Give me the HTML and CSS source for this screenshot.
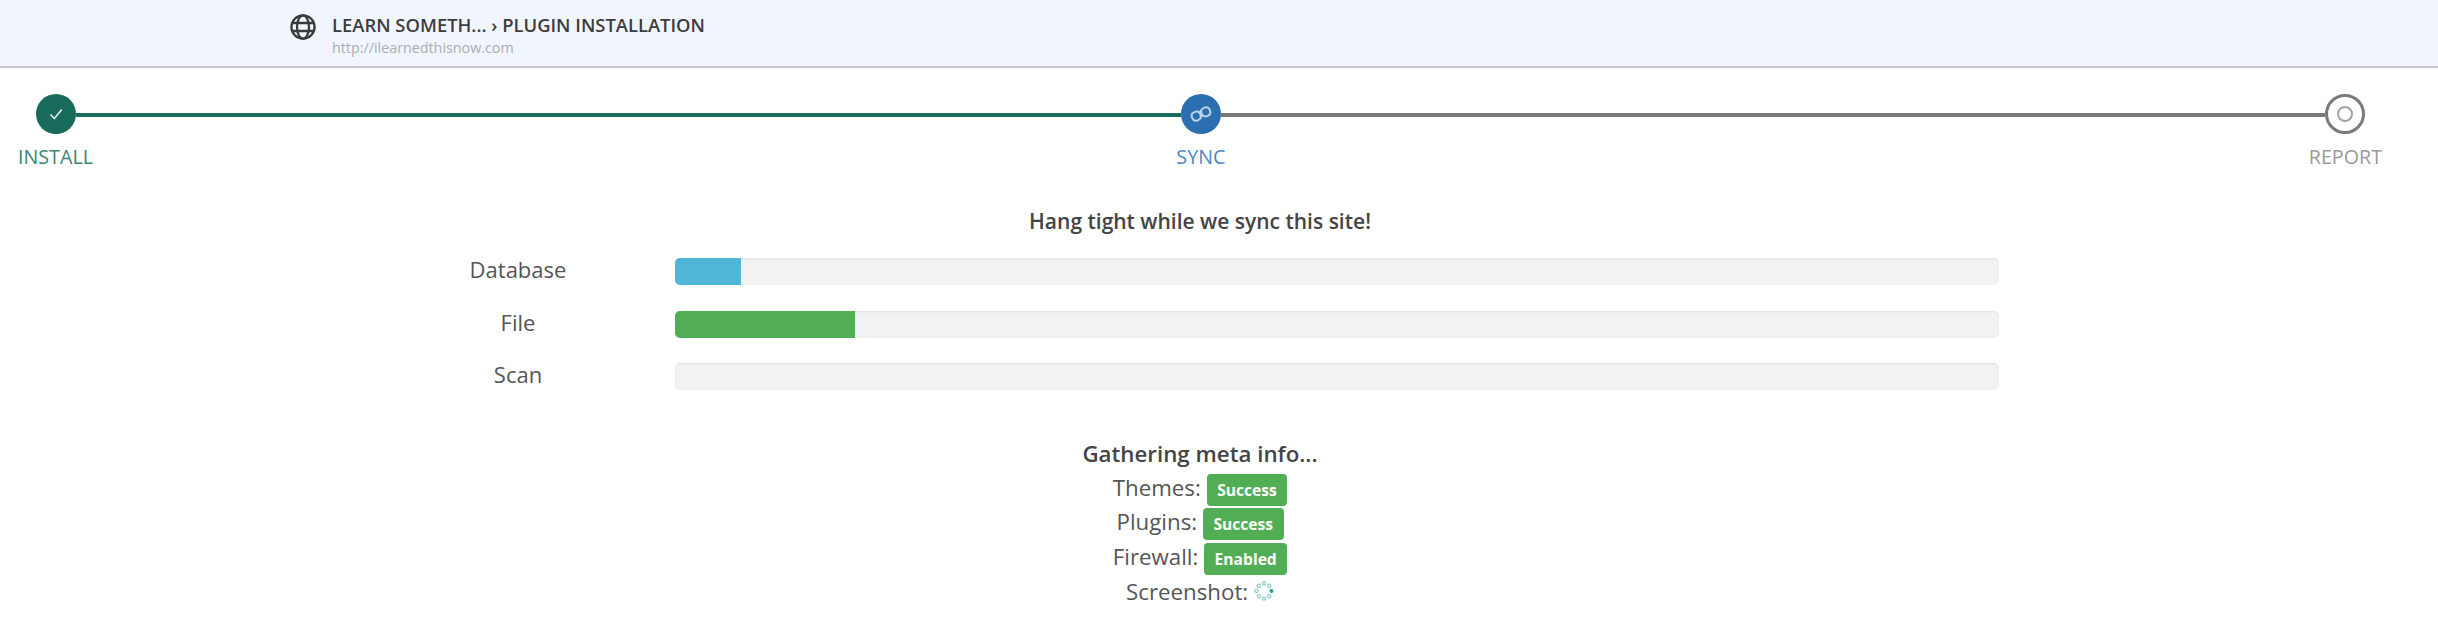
FILE: index.html
```html
<!DOCTYPE html>
<html lang="en">
<head>
<meta charset="utf-8">
<title>Plugin Installation</title>
<link rel="stylesheet" href="styles.css">
</head>
<body>
<header class="site-bar">
  <svg class="globe" viewBox="0 0 26 26" aria-hidden="true">
    <g fill="none" stroke="#3a3a3a" stroke-width="2.3">
      <circle cx="13" cy="13.5" r="11.6"/>
      <ellipse cx="13" cy="13.5" rx="6" ry="11.6"/>
      <path d="M2 9.5h22M2 17.5h22"/>
    </g>
  </svg>
  <div class="site-text">
    <div class="crumb">LEARN SOMETH... › PLUGIN INSTALLATION</div>
    <div class="url">http://ilearnedthisnow.com</div>
  </div>
</header>

<section class="stepper">
  <div class="track">
    <span class="node node-done">
      <svg viewBox="0 0 40 40" class="node-icon" aria-hidden="true"><path d="M14.5 20.5l3.8 4 7.5-9" fill="none" stroke="#dfeee9" stroke-width="1.6"/></svg>
    </span>
    <span class="line line-done"></span>
    <span class="node node-active">
      <svg viewBox="0 0 40 40" class="node-icon" aria-hidden="true">
        <g fill="none" stroke="#bcd3e9" stroke-width="2.2" transform="rotate(-24 20 20) translate(2 2) scale(.9)">
          <path d="M20 18.200C18 15.500 15.800 15 14 15c-3 0-4.800 2.200-4.800 5s1.800 5 4.800 5c1.800 0 4-.5 6-3.200"/>
          <path d="M20 21.800C22 24.500 24.200 25 26 25c3 0 4.800-2.200 4.800-5s-1.800-5-4.800-5c-1.800 0-4 .5-6 3.200"/>
          <path d="M18 17.500l4 5M22 17.500l-4 5"/>
        </g>
      </svg>
    </span>
    <span class="line line-todo"></span>
    <span class="node node-todo"><span class="node-inner"></span></span>
  </div>
  <div class="step-labels">
    <span class="step-label label-done">INSTALL</span>
    <span class="step-label label-active">SYNC</span>
    <span class="step-label label-todo">REPORT</span>
  </div>
</section>

<main class="sync">
  <h2 class="sync-title">Hang tight while we sync this site!</h2>
  <div class="bars">
    <div class="bar-row">
      <span class="bar-label">Database</span>
      <div class="bar"><div class="fill fill-info" style="width:5%"></div></div>
    </div>
    <div class="bar-row">
      <span class="bar-label">File</span>
      <div class="bar"><div class="fill fill-success" style="width:13.6%"></div></div>
    </div>
    <div class="bar-row">
      <span class="bar-label">Scan</span>
      <div class="bar"></div>
    </div>
  </div>
  <div class="meta">
    <h3 class="meta-title">Gathering meta info...</h3>
    <div class="meta-line">Themes: <span class="badge">Success</span></div>
    <div class="meta-line">Plugins: <span class="badge">Success</span></div>
    <div class="meta-line">Firewall: <span class="badge">Enabled</span></div>
    <div class="meta-line">Screenshot:
      <svg class="spinner" viewBox="0 0 20 20" aria-hidden="true">
        <g fill="none" stroke="#8fd0cc" stroke-width="1.3">
          <circle cx="10" cy="2.600" r="1.600"/>
          <circle cx="15.200" cy="4.800" r="1.600"/>
          <circle cx="4.800" cy="4.800" r="1.600"/>
          <circle cx="2.600" cy="10" r="1.600"/>
          <circle cx="4.800" cy="15.200" r="1.600"/>
          <circle cx="10" cy="17.400" r="1.600"/>
          <circle cx="15.200" cy="15.200" r="1.600"/>
        </g>
        <circle cx="17.400" cy="10" r="2" fill="#2e9c8e"/>
      </svg>
    </div>
  </div>
</main>
</body>
</html>
```

FILE: styles.css
```css
* { box-sizing: border-box; }

body {
  margin: 0;
  background: #fff;
  font-family: "Open Sans", "Noto Sans", sans-serif;
  color: #444;
  overflow: hidden;
}

.site-bar {
  height: 68px;
  background: #f1f6fe;
  border-bottom: 2px solid #c9cbcf;
  display: flex;
  align-items: flex-start;
  gap: 16px;
  padding: 13px 0 0 290px;
}

.globe { width: 26px; height: 27px; flex: none; }

.site-text { display: flex; flex-direction: column; }

.crumb {
  font-size: 18.4px;
  font-weight: 600;
  line-height: 24px;
  color: #3d3d3d;
}

.url {
  font-size: 14.3px;
  line-height: 20px;
  margin-top: 1px;
  color: #a9adb2;
}

.stepper { padding-top: 26px; }

.track {
  display: flex;
  align-items: center;
  margin: 0 73px 0 36px;
}

.node {
  width: 40px;
  height: 40px;
  border-radius: 50%;
  flex: none;
  display: flex;
  align-items: center;
  justify-content: center;
}

.node-icon { width: 40px; height: 40px; }

.node-done { background: #196b5c; }
.node-active { background: #2b6fb0; }

.node-todo {
  background: #fff;
  border: 3.5px solid #7a7a7a;
}

.node-inner {
  width: 16px;
  height: 16px;
  border-radius: 50%;
  border: 2px solid #a3a3a3;
}

.line { flex: 1; height: 4px; margin-top: 2px; }
.line-done { background: #196b5c; }
.line-todo { background: #7a7a7a; }

.step-labels {
  display: flex;
  justify-content: space-between;
  padding: 10px 56px 0 18px;
}

.step-label { font-size: 19.7px; line-height: 26px; }
.label-done { color: #3d8476; }
.label-active { color: #4f86bd; }
.label-todo { color: #999; }

.sync { padding-top: 36px; }

.sync-title {
  margin: 0;
  padding-right: 38px;
  text-align: center;
  font-size: 21px;
  font-weight: 600;
  line-height: 30px;
  color: #444;
}

.bars {
  display: flex;
  flex-direction: column;
  gap: 25.500px;
  padding: 22px 439px 0 361px;
}

.bar-row {
  display: grid;
  grid-template-columns: 314px 1fr;
  align-items: center;
}

.bar-label {
  text-align: center;
  font-size: 22px;
  color: #555;
  line-height: 22px;
  padding-bottom: 5px;
}

.bar {
  height: 27px;
  background: #f2f2f2;
  border-radius: 5px;
  box-shadow: inset 0 1px 2px rgba(0, 0, 0, .08);
  overflow: hidden;
}

.fill { height: 100%; }
.fill-info { background: #4fb6d8; }
.fill-success { background: #52ae55; }

.meta { padding: 45.500px 38px 0 0; text-align: center; }

.meta-title {
  margin: 0;
  font-size: 22.3px;
  font-weight: 600;
  line-height: 35px;
  color: #444;
}

.meta-line {
  font-size: 22.3px;
  line-height: 34.700px;
  height: 34.700px;
  color: #555;
}

.badge {
  display: inline-block;
  background: #52ae55;
  color: #fff;
  font-size: 15.6px;
  font-weight: 700;
  line-height: 20px;
  padding: 6px 10.500px;
  border-radius: 4px;
  vertical-align: middle;
}

.spinner { width: 20px; height: 20px; vertical-align: -1px; }
```
